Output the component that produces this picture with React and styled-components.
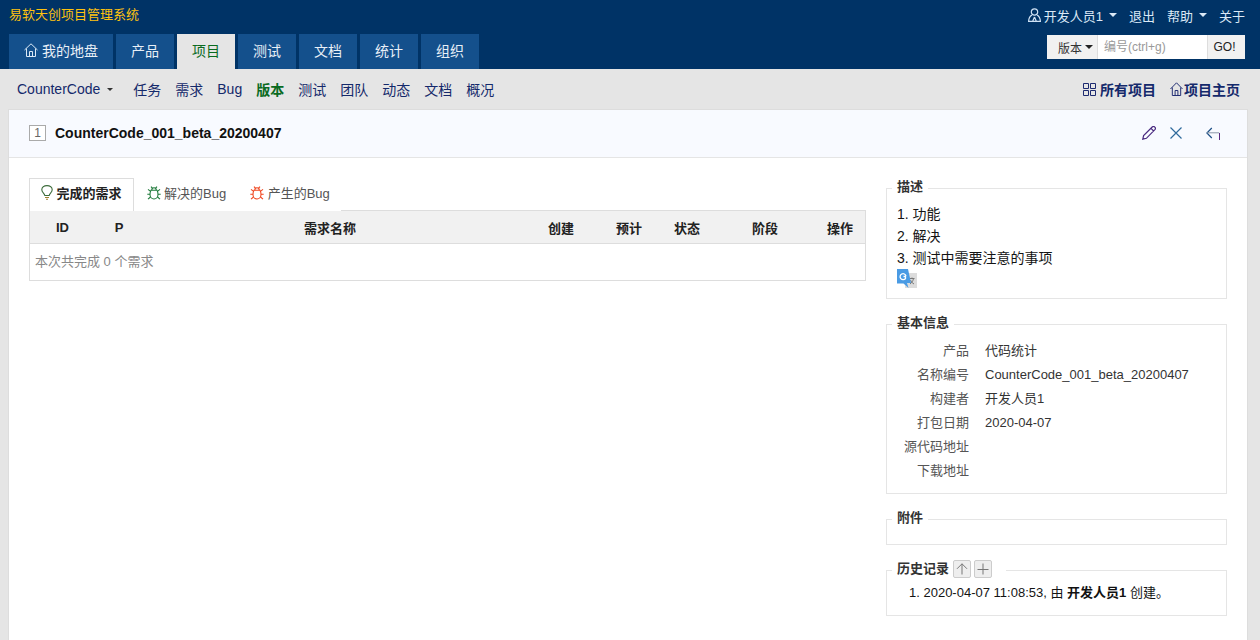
import React from "react";
import styled, { createGlobalStyle } from "styled-components";

const GlobalStyle = createGlobalStyle`
  html, body {
    margin: 0;
    padding: 0;
    height: 640px;
    overflow: hidden;
    background: #e5e5e5;
    font-family: "Liberation Sans", "Noto Sans CJK SC", sans-serif;
    font-size: 13px;
    color: #141414;
  }
`;

const mainTabs = ["产品", "项目", "测试", "文档", "统计", "组织"];
const subLinks = ["任务", "需求", "Bug", "版本", "测试", "团队", "动态", "文档", "概况"];
const columns = ["ID", "P", "需求名称", "创建", "预计", "状态", "阶段", "操作"];
const infoRows = [
  ["产品", "代码统计"],
  ["名称编号", "CounterCode_001_beta_20200407"],
  ["构建者", "开发人员1"],
  ["打包日期", "2020-04-07"],
  ["源代码地址", ""],
  ["下载地址", ""],
];

const HomeIcon = ({ color, size }) => (
  <svg width={size} height="14" viewBox="0 0 14 14" fill="none" stroke={color} preserveAspectRatio="none">
    <path d="M.5 7 L7 .8 L13.5 7 M2.5 5.5 V13.5 H11.5 V5.5 M5.5 13.5 V8.5 H8.5 V13.5" />
  </svg>
);

const UserIcon = () => (
  <svg width="13" height="14" viewBox="0 0 13 14" fill="none" stroke="#cfe2f5" strokeWidth="1.2">
    <circle cx="6.5" cy="4" r="3.2" />
    <path d="M4 7 C2 8 .8 10 .6 13.4 H12.4 C12.2 10 11 8 9 7 M6.5 9 L4.8 13 M6.5 9 L8.2 13" />
  </svg>
);

const GridIcon = () => (
  <svg width="13" height="13" viewBox="0 0 13 13" fill="none" stroke="#1d2a70">
    <path d="M.5 .5 H5.5 V5.5 H.5 Z M7.5 .5 H12.5 V5.5 H7.5 Z M.5 7.5 H5.5 V12.5 H.5 Z M7.5 7.5 H12.5 V12.5 H7.5 Z" />
  </svg>
);

const PencilIcon = () => (
  <svg width="14" height="14" viewBox="0 0 14 14" fill="none" stroke="#4a2a80" strokeWidth="1.2">
    <path d="M.8 13.2 L1.6 9.6 L10.2 1 C11 .3 12 .3 12.8 1.1 C13.6 1.9 13.6 2.9 12.9 3.7 L4.4 12.3 Z M9 2.4 L11.6 5" />
  </svg>
);

const CloseIcon = () => (
  <svg width="12" height="12" viewBox="0 0 12 12" stroke="#2f6a9c" strokeWidth="1.2">
    <path d="M.5 .5 L11.5 11.5 M11.5 .5 L.5 11.5" />
  </svg>
);

const BackIcon = () => (
  <svg width="14" height="14" viewBox="0 0 14 14" fill="none">
    <path d="M5.8 2 L.9 7 L5.8 12" stroke="#1d4f86" strokeWidth="1.2" />
    <path d="M1 6.8 H13.2" stroke="#8a98a8" />
    <path d="M13.5 7 V14" stroke="#5a2a82" />
  </svg>
);

const BulbIcon = () => (
  <svg width="12" height="15" viewBox="0 0 12 15" fill="none" stroke="#3b6b3a" strokeWidth="1.1">
    <path d="M3.8 10.5 C3.5 8.5 .8 7.5 .8 4.8 C.8 2.4 3 .6 6 .6 C9 .6 11.2 2.4 11.2 4.8 C11.2 7.5 8.5 8.5 8.2 10.5 Z" />
    <path d="M4 12.5 H8 M5 14.2 H7" stroke="#a08030" />
  </svg>
);

const BugIcon = ({ color }) => (
  <svg width="14" height="14" viewBox="0 0 14 14" fill="none" stroke={color} strokeWidth="1.1">
    <path d="M4 4.2 H10 C10.8 5.5 11 7 11 8.5 C11 11 9.2 13 7 13 C4.8 13 3 11 3 8.5 C3 7 3.2 5.5 4 4.2 Z" />
    <path d="M4.8 4 C4.8 2.6 5.8 1.8 7 1.8 C8.2 1.8 9.2 2.6 9.2 4" />
    <path d="M3.6 5.4 L1 3.4 M10.4 5.4 L13 3.4 M3 8.2 H.3 M11 8.2 H13.7 M3.5 11 L1 13.2 M10.5 11 L13 13.2 M4 .6 L5.4 2.2 M10 .6 L8.6 2.2" />
  </svg>
);

const ArrowIcon = () => (
  <svg width="12" height="12" viewBox="0 0 12 12" fill="none" stroke="#777">
    <path d="M6 .8 V11.5 M1 5.8 L6 .8 L11 5.8" />
  </svg>
);

const PlusIcon = () => (
  <svg width="12" height="12" viewBox="0 0 12 12" stroke="#777">
    <path d="M6 .5 V11.5 M.5 6.5 H11.5" />
  </svg>
);

const TranslateIcon = () => (
  <svg width="20" height="20" viewBox="0 0 20 20">
    <rect x="8" y="4" width="12" height="15" fill="#dcdcdc" />
    <path d="M12.5 9.5 h5 M15 8.5 v1 M16.5 9.5 c-.5 2.5 -1.5 4 -3.5 5.5 M13.5 11 c.6 1.5 1.8 3 3.5 4" stroke="#777" fill="none" />
    <path d="M0 0 H11 L14 14 H10 L11.5 19 L6.5 14.5 H0 Z" fill="#4a9be4" />
    <path d="M9 7 A3 3 0 1 0 8.5 9.5 V7.5 H6.5" fill="none" stroke="#fff" strokeWidth="1.3" />
  </svg>
);

const App = () => {
  return (
    <React.Fragment>
      <GlobalStyle />
      <Header>
        <TopRow>
          <Brand>易软天创项目管理系统</Brand>
          <UserMenu>
            <UserItem>
              <UserIcon />
              开发人员1
              <Caret />
            </UserItem>
            <UserItem>退出</UserItem>
            <UserItem>
              帮助
              <Caret />
            </UserItem>
            <UserItem>关于</UserItem>
          </UserMenu>
        </TopRow>
        <NavRow>
          <Tabs>
            <Tab>
              <HomeIcon color="#dbe9f6" size={14} />
              我的地盘
            </Tab>
            {mainTabs.map((t) => (
              <Tab key={t} $active={t === "项目"} $fixed>
                {t}
              </Tab>
            ))}
          </Tabs>
          <Search>
            <SearchType>
              版本
              <DarkCaret />
            </SearchType>
            <SearchInput placeholder="编号(ctrl+g)" />
            <GoButton>GO!</GoButton>
          </Search>
        </NavRow>
      </Header>

      <SubNav>
        <SubLinks>
          <ProjectSwitch>
            CounterCode
            <SmallCaret />
          </ProjectSwitch>
          {subLinks.map((s, i) => (
            <SubLink key={i} $active={s === "版本"}>
              {s}
            </SubLink>
          ))}
        </SubLinks>
        <SubActions>
          <SubAction>
            <GridIcon />
            所有项目
          </SubAction>
          <SubAction $tight>
            <HomeIcon color="#1d2a70" size={13} />
            项目主页
          </SubAction>
        </SubActions>
      </SubNav>

      <Panel>
        <PanelHead>
          <Title>
            <IdBox>1</IdBox>
            CounterCode_001_beta_20200407
          </Title>
          <PanelTools>
            <PencilIcon />
            <CloseIcon />
            <BackIcon />
          </PanelTools>
        </PanelHead>
        <PanelBody>
          <MainColumn>
            <ContentTabs>
              <ContentTab $active>
                <BulbIcon />
                完成的需求
              </ContentTab>
              <ContentTab>
                <BugIcon color="#1f7a3a" />
                解决的Bug
              </ContentTab>
              <ContentTab>
                <BugIcon color="#f0451e" />
                产生的Bug
              </ContentTab>
            </ContentTabs>
            <TableBox>
              <TableHead>
                {columns.map((c) => (
                  <HeadCell key={c}>{c}</HeadCell>
                ))}
              </TableHead>
              <TableFoot>本次共完成 0 个需求</TableFoot>
            </TableBox>
          </MainColumn>

          <SideColumn>
            <Box>
              <Legend>描述</Legend>
              <DescBody>
                <DescLine>1. 功能</DescLine>
                <DescLine>2. 解决</DescLine>
                <DescLine>3. 测试中需要注意的事项</DescLine>
                <TranslateIcon />
              </DescBody>
            </Box>
            <Box>
              <Legend>基本信息</Legend>
              <InfoGrid>
                {infoRows.map(([k, v]) => (
                  <React.Fragment key={k}>
                    <InfoKey>{k}</InfoKey>
                    <InfoValue>{v}</InfoValue>
                  </React.Fragment>
                ))}
              </InfoGrid>
            </Box>
            <Box>
              <Legend>附件</Legend>
              <EmptyBody />
            </Box>
            <Box>
              <Legend $wide>
                历史记录
                <MiniButton>
                  <ArrowIcon />
                </MiniButton>
                <MiniButton>
                  <PlusIcon />
                </MiniButton>
              </Legend>
              <HistoryLine>
                1. 2020-04-07 11:08:53, 由 <strong>开发人员1</strong> 创建。
              </HistoryLine>
            </Box>
          </SideColumn>
        </PanelBody>
      </Panel>
    </React.Fragment>
  );
};

const Header = styled.header`
  height: 69px;
  background: #036;
  padding: 0 15px 0 9px;
  box-sizing: border-box;
`;

const TopRow = styled.div`
  display: flex;
  justify-content: space-between;
  align-items: center;
  height: 34px;
  padding-bottom: 4px;
  box-sizing: border-box;
`;

const Brand = styled.div`
  margin-bottom: 3px;
  color: #ffc20e;
  font-size: 13px;
`;

const UserMenu = styled.div`
  display: flex;
  gap: 12px;
  color: #dbe9f6;
  font-size: 13px;
`;

const UserItem = styled.div`
  display: flex;
  align-items: center;
  gap: 3px;
`;

const Caret = styled.span`
  width: 0;
  height: 0;
  margin-left: 3px;
  border-left: 4px solid transparent;
  border-right: 4px solid transparent;
  border-top: 4px solid #dbe9f6;
`;

const DarkCaret = styled(Caret)`
  margin-left: 3px;
  border-top-color: #222;
`;

const SmallCaret = styled(Caret)`
  margin-left: 7px;
  border-left-width: 3px;
  border-right-width: 3px;
  border-top: 3px solid #333;
`;

const NavRow = styled.div`
  display: flex;
  justify-content: space-between;
`;

const Tabs = styled.nav`
  display: flex;
  gap: 3px;
`;

const Tab = styled.div`
  display: flex;
  align-items: center;
  justify-content: center;
  gap: 4px;
  height: 35px;
  padding: 0 15px 3px;
  width: ${(p) => (p.$fixed ? "58px" : "auto")};
  box-sizing: border-box;
  font-size: 14px;
  background: ${(p) => (p.$active ? "#e5e5e5" : "#14508c")};
  color: ${(p) => (p.$active ? "#0a6b1f" : "#e8eff7")};
`;

const Search = styled.div`
  display: flex;
  height: 24px;
  margin-top: 1px;
  font-size: 12px;
`;

const SearchType = styled.div`
  display: flex;
  align-items: center;
  width: 51px;
  padding-left: 11px;
  box-sizing: border-box;
  background: #f1f1f1 radial-gradient(#d8d8d8 0.5px, transparent 0.6px) 0 0 / 6px 6px;
  border-right: 1px solid #ddd;
  color: #333;
`;

const SearchInput = styled.input`
  width: 109px;
  padding: 0 6px;
  box-sizing: border-box;
  border: none;
  outline: none;
  background: #fff;
  font: inherit;
  &::placeholder {
    color: #999;
  }
`;

const GoButton = styled.div`
  display: flex;
  align-items: center;
  justify-content: center;
  width: 38px;
  padding-right: 4px;
  background: #f1f1f1 radial-gradient(#d8d8d8 0.5px, transparent 0.6px) 0 0 / 6px 6px;
  border-left: 1px solid #ddd;
  box-sizing: border-box;
  color: #222;
`;

const SubNav = styled.div`
  display: flex;
  justify-content: space-between;
  align-items: center;
  height: 40px;
  padding: 0 20px 0 17px;
  box-sizing: border-box;
  font-size: 14px;
`;

const SubLinks = styled.div`
  display: flex;
  align-items: center;
  gap: 14px;
  color: #14296b;
`;

const ProjectSwitch = styled.div`
  display: flex;
  align-items: center;
  margin-right: 6px;
  color: #14296b;
`;

const SubLink = styled.div`
  color: ${(p) => (p.$active ? "#0a6b1f" : "#14296b")};
  font-weight: ${(p) => (p.$active ? "bold" : "normal")};
`;

const SubActions = styled.div`
  display: flex;
  gap: 14px;
  color: #14296b;
  font-weight: bold;
`;

const SubAction = styled.div`
  display: flex;
  align-items: center;
  gap: ${(p) => (p.$tight ? "1px" : "4px")};
`;

const Panel = styled.main`
  margin: 0 12px 0 8px;
  height: 531px;
  background: #fff;
  border: 1px solid #ddd;
  border-bottom: none;
  box-sizing: border-box;
`;

const PanelHead = styled.div`
  display: flex;
  justify-content: space-between;
  align-items: center;
  height: 48px;
  padding: 0 27px 2px 20px;
  box-sizing: border-box;
  background: #f8faff;
  border-bottom: 1px solid #e5e5e5;
`;

const Title = styled.div`
  display: flex;
  align-items: center;
  gap: 9px;
  font-weight: bold;
  font-size: 14px;
  color: #111;
`;

const IdBox = styled.span`
  display: flex;
  align-items: center;
  justify-content: center;
  width: 15px;
  height: 14px;
  border: 1px solid #aaa;
  background: #fff;
  color: #666;
  font-size: 12px;
  font-weight: normal;
`;

const PanelTools = styled.div`
  display: flex;
  align-items: center;
  gap: 14px;
  & > svg:last-child {
    margin-left: 10px;
  }
`;

const PanelBody = styled.div`
  display: flex;
  justify-content: space-between;
  padding: 20px 20px 0 20px;
`;

const MainColumn = styled.div`
  width: 837px;
`;

const ContentTabs = styled.div`
  display: flex;
  height: 32px;
`;

const ContentTab = styled.div`
  display: flex;
  align-items: center;
  gap: 3.5px;
  padding: 0 ${(p) => (p.$active ? "11px" : "10px")} 5px ${(p) => (p.$active ? "11px" : "12px")};
  margin-bottom: -1px;
  background: #fff;
  color: ${(p) => (p.$active ? "#222" : "#555")};
  font-weight: ${(p) => (p.$active ? "bold" : "normal")};
  border: ${(p) => (p.$active ? "1px solid #ddd" : "1px solid transparent")};
  border-bottom: none;
  position: relative;
`;

const TableBox = styled.div`
  border: 1px solid #ddd;
`;

const TableHead = styled.div`
  display: grid;
  grid-template-columns: 65px 48px 374px 88px 48px 68px 88px 56px;
  height: 32px;
  align-items: center;
  background: #f1f1f1;
  border-bottom: 1px solid #ddd;
`;

const HeadCell = styled.div`
  text-align: center;
  font-weight: bold;
  color: #222;
  &:last-child {
    padding-left: 6px;
  }
`;

const TableFoot = styled.div`
  height: 36px;
  line-height: 36px;
  padding-left: 5px;
  color: #888;
`;

const SideColumn = styled.aside`
  display: flex;
  flex-direction: column;
  gap: 16px;
  width: 341px;
  padding-top: 1px;
`;

const Box = styled.fieldset`
  margin: 0;
  padding: 0 10px;
  border: 1px solid #e5e5e5;
  min-width: 0;
  font-size: 13px;
`;

const Legend = styled.legend`
  display: flex;
  align-items: center;
  height: 15px;
  line-height: 15px;
  padding: 0 ${(p) => (p.$wide ? "14px" : "5px")} 4px 5px;
  margin-left: -5px;
  font-weight: bold;
  color: #333;
`;

const DescBody = styled.div`
  padding: 5px 0 9px;
  font-size: 14px;
  svg {
    display: block;
  }
`;

const DescLine = styled.div`
  line-height: 22px;
`;

const EmptyBody = styled.div`
  height: 15px;
`;

const InfoGrid = styled.div`
  display: grid;
  grid-template-columns: 72px 1fr;
  column-gap: 16px;
  grid-auto-rows: 24px;
  line-height: 24px;
  padding: 5px 0 10px;
`;

const InfoKey = styled.div`
  text-align: right;
  color: #555;
  white-space: nowrap;
`;

const InfoValue = styled.div`
  color: #333;
`;

const MiniButton = styled.span`
  display: flex;
  align-items: center;
  justify-content: center;
  width: 18px;
  height: 18px;
  box-sizing: border-box;
  margin: -1px 0 -2px 3px;
  background: #eee;
  border: 1px solid #ccc;
  border-radius: 2px;
  &:first-of-type {
    margin-left: 4px;
  }
`;

const HistoryLine = styled.div`
  padding: 2px 0 11px 12px;
  line-height: 22px;
  strong {
    color: #111;
  }
`;

export default App;
